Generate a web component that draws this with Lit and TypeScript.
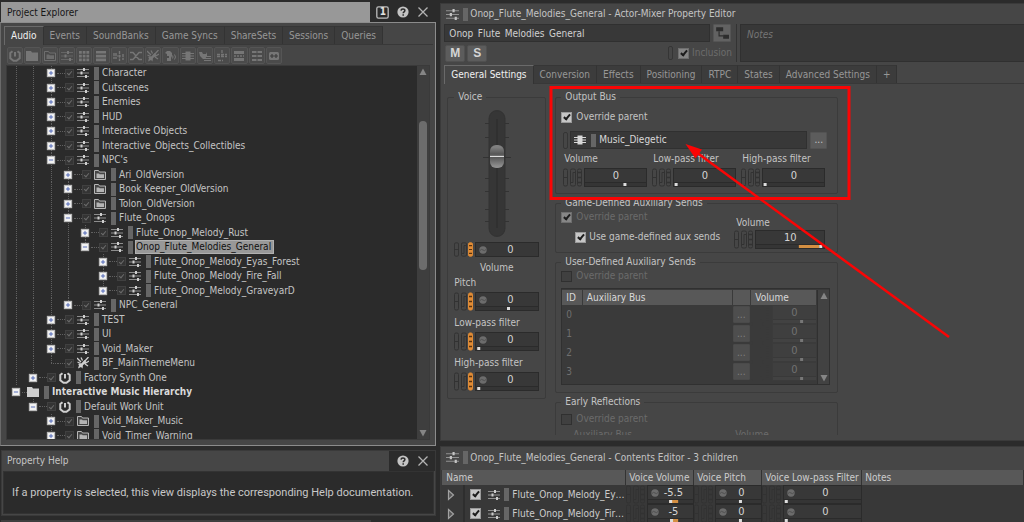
import { LitElement, html, css, svg, nothing } from "lit";
import { customElement, property } from "lit/decorators.js";
import { classMap } from "lit/directives/class-map.js";

/* ---------- shared look ---------- */

const base = css`
  *, *::before, *::after { box-sizing: border-box; }
  :host {
    font-family: "DejaVu Sans Condensed", "Open Sans", "Noto Sans", sans-serif;
    font-size: 10px;
    line-height: 14px;
    color: #c4c4c4;
  }
  svg { display: block; flex: none; }
  button, input, textarea { font: inherit; color: inherit; margin: 0; padding: 0; border: 0; background: none; border-radius: 0; outline: 0; }
  input[type="checkbox"] {
    appearance: none; flex: none; display: grid; place-content: center;
    width: 11px; height: 11px; background: #c6c6c6; border: 1px solid #9a9a9a;
  }
  input[type="checkbox"]:checked::before {
    content: ""; width: 4px; height: 7px; margin-top: -2px;
    border: solid #1c1c1c; border-width: 0 2px 2px 0; transform: rotate(40deg);
  }
  input[type="checkbox"]:disabled { background: #868686; border-color: #6e6e6e; }
  input[type="checkbox"]:disabled:not(:checked) { background: #404040; border-color: #303030; }
  label { white-space: nowrap; }
  .tint { flex: none; width: 5px; height: 13px; background: #666; }
`;

const glyphs: Record<string, unknown> = {
  mixer: svg`<g fill="currentColor"><path d="M0 2h12v1H0zM0 5.500h12v1H0zM0 9h12v1H0z" opacity=".6"/><path d="M6 1h2v3H6zM3.500 4.500h2v3h-2zM8 8h2v3H8z"/></g>`,
  unit: svg`<path d="M3.500 1.200 1.300 3v5.200L4.500 10.800h3L10.700 8.200V3L8.500 1.200" fill="none" stroke="currentColor" stroke-width="2"/><path d="M5 2h2v4.500H5z" fill="currentColor"/>`,
  folder: svg`<path d="M0 1h5l1 1.500h6V11H0z" fill="currentColor"/>`,
  vfolder: svg`<path d="M.5 1.500h4l1 1.500h6v7.500H.5z" fill="#4a4a4a" stroke="currentColor" opacity=".85"/><path d="M2.500 4.500h2.500l.7.800H10V9H2.500z" fill="currentColor" opacity=".8"/>`,
  grid: svg`<path d="M1 1h2.800v2.800H1zM4.700 1h2.800v2.800H4.700zM8.400 1h2.800v2.800H8.400zM1 4.700h2.800v2.800H1zM4.700 4.700h2.800v2.800H4.700zM8.400 4.700h2.800v2.800H8.400zM1 8.400h2.800v2.800H1zM4.700 8.400h2.800v2.800H4.700zM8.400 8.400h2.800v2.800H8.400z" fill="currentColor"/>`,
  bars: svg`<path d="M1 1h10v2.600H1zM1 4.800h10v2.600H1zM1 8.600h10v2.600H1z" fill="currentColor"/>`,
  seq: svg`<path d="M1 3v6M3 3v6M6.500 1v10M10 4v6" stroke="currentColor" stroke-width="1.400" stroke-dasharray="3 .8"/><path d="M4 6h4" stroke="currentColor"/>`,
  blend: svg`<path d="M0 2.500h3l6 7h3M0 9.500h3l6-7h3" fill="none" stroke="currentColor" stroke-width="1.400"/>`,
  sound: svg`<path d="M0 1l4 4M.5 5l3 1.500M4 .5l1.500 3M11.500 0 7 5M12 4 8 6.500M11 9 8 7" stroke="currentColor" stroke-width="1.300"/><path d="M7.500 3 10 5.500 6 8l-.5 3.500L4 10l-3 1.500L2 8 1 7l3.500-.7z" fill="currentColor"/>`,
  voice: svg`<path d="M1 3 3 1h3l2 2v3L7 8v3H3V8h2V6H3V4z" fill="currentColor"/><path d="M8.500 5.500q1 1.500 0 3M10.500 4.500q2 2.500 0 5" fill="none" stroke="currentColor"/>`,
  bus: svg`<path d="M3.500 1.500h5v9h-5z" fill="currentColor"/><path d="M0 3.500h12M0 6h12M0 8.500h12" stroke="currentColor"/>`,
  plug: svg`<path d="M0 2h3l1 2h3l1-2v4l-2 3H4L1 6z" fill="currentColor"/><path d="M6 6.500h6M6 8.500h6M5 10.500h7" stroke="currentColor"/>`,
  track: svg`<path d="M1 4.500h10M6 0v8M1 6.500h10M2 10.500h5" stroke="currentColor" stroke-width="1.300" stroke-dasharray="3 1"/>`,
  list: svg`<path d="M1 1h10v3H1zM1 8h10v3H1z" fill="currentColor"/><path d="M1 6h10" stroke="currentColor" stroke-width="1.500" stroke-dasharray="2 1"/>`,
  cells: svg`<path d="M1 1h4v2H1zM7 1h4v2H7zM1 5h4v2H1zM7 5h4v2H7zM1 9h4v2H1zM7 9h4v2H7z" fill="currentColor"/><path d="M5 2h2M5 6h2M5 10h2" stroke="currentColor"/>`,
  link: svg`<rect x="1" y="2" width="10" height="8" rx="1.500" fill="currentColor"/><path d="M2 6h8M4 4v4M8 4v4" stroke="#3c3c3c" stroke-width="1.200"/>`,
  tree: svg`<path d="M1 1h6v3.500H1zM7 7.500h5V11H7z" fill="#2d2d2d"/><path d="M3.500 4.500v4H7" fill="none" stroke="#2d2d2d"/>`,
  one: svg`<rect x=".75" y=".75" width="10.500" height="10.500" rx="1.500" fill="none" stroke="#bdbdbd" stroke-width="1.200"/>`,
  help: svg`<circle cx="6" cy="6" r="5.600" fill="#c4c4c4"/><path d="M4 4.600C4.100 2.300 8 2.400 7.900 4.600 7.900 5.900 6.200 5.900 6.200 7.300M6.200 8.200v1.500" fill="none" stroke="#2b2b2b" stroke-width="1.500"/>`,
  close: svg`<path d="M1.500 1.500l9 9M10.500 1.500l-9 9" stroke="#b4b4b4" stroke-width="1.300"/>`,
  up: svg`<path d="M2.500 9 6 2.500 9.500 9z" fill="#858585"/>`,
  down: svg`<path d="M2.500 3 6 9.500 9.500 3z" fill="#858585"/>`,
  play: svg`<path d="M3.500 1.500 8.500 6l-5 4.500z" fill="#555" stroke="#a2a2a2" stroke-width="1.200"/>`,
  plus: svg`<rect x="1.500" y="1.500" width="9" height="9" fill="#f2f2f2" stroke="#bbb"/><path d="M3.500 6h5M6 3.500v5" stroke="#3a54b0"/>`,
  minus: svg`<rect x="1.500" y="1.500" width="9" height="9" fill="#f2f2f2" stroke="#bbb"/><path d="M3.500 6h5" stroke="#3a54b0"/>`,
};

const icon = (name: string, size = 12) =>
  html`<svg width=${size} height=${size} viewBox="0 0 12 12" aria-hidden="true">${glyphs[name]}</svg>`;

/* ---------- tab strip ---------- */

@customElement("tab-strip")
export class TabStrip extends LitElement {
  @property({ attribute: false }) tabs: string[] = [];
  static styles = [base, css`
    :host { display: block; flex: none; }
    .strip { display: flex; height: 19px; border-bottom: 1px solid #383838; }
    button { flex: none; padding: 0 6px; height: 18px; background: #3c3c3c; color: #979797; border-right: 1px solid #333; border-top: 1px solid #363636; white-space: nowrap; }
    button.on { height: 19px; background: #464646; color: #f0f0f0; border-top: 1px solid #6a6a6a; border-left: 1px solid #6a6a6a; }
  `];
  render() {
    return html`<div class="strip" role="tablist">${this.tabs.map((t, i) =>
      html`<button role="tab" aria-selected=${i === 0} class=${classMap({ on: i === 0 })}>${t}</button>`)}</div>`;
  }
}

/* ---------- numeric field with link / RTPC / state markers ---------- */

@customElement("num-field")
export class NumField extends LitElement {
  @property() label = "Value";
  @property() value = "0";
  @property({ type: Number }) pos = 50;
  @property({ type: Number }) fillFrom = 0;
  @property({ type: Number }) fillTo = 0;
  @property({ type: Boolean }) slim = false;
  @property({ type: Boolean }) rtpc = false;
  @property({ type: Boolean }) dot = false;
  @property({ type: Boolean, reflect: true }) disabled = false;
  static styles = [base, css`
    :host { display: flex; min-width: 0; }
    :host([disabled]) .box { background: #3f3f3f; border-color: #3b3b3b; color: #717171; }
    :host([disabled]) .strip { background: #424242; border-color: #393939; }
    .box { flex: 1; min-width: 0; display: flex; flex-direction: column; background: #383838; border: 1px solid #2b2b2b; }
    .top { flex: 1; display: flex; align-items: center; padding-left: 3px; }
    .top.plain { padding-left: 0; }
    input { flex: 1; min-width: 0; width: 10px; height: 13px; text-align: center; font-size: 11px; color: #d4d4d4; }
    input:disabled { color: #717171; }
    .dotted input { padding-right: 5px; }
    .strip { height: 4px; border-top: 1px solid #2b2b2b; background: #353535; }
  `];
  render() {
    const h = this.slim ? 15 : 19;
    const line = this.disabled ? "#3a3a3a" : "#323232";
    const on = this.rtpc;
    return html`
      <svg width="21" height=${h} viewBox="0 0 21 19" preserveAspectRatio="none" fill="none" stroke=${line} aria-hidden="true">
        <rect x=".5" y="1" width="4" height="17" rx="1.500"/><path d="M0 9.500h5"/>
        <rect x="7.500" y="1" width="5" height="17" rx="1.500"/><path d="M8 14.500h2v-10h2"/>
        <rect x="14.500" y="1" width="4" height="17" rx="1.500" fill=${on ? "#e08b35" : "none"} stroke=${on ? "#e08b35" : line}/>
        <path d="M15 4.500h3M15 9.500h3M15 14.500h3" stroke=${on ? "#5a3410" : line} stroke-width="1.500"/>
      </svg>
      <div class="box">
        <div class=${classMap({ top: true, plain: !this.dot, dotted: this.dot })}>
          ${this.dot ? html`<svg width="8" height="8" viewBox="0 0 8 8"><circle cx="4" cy="4" r="3.700" fill="#6c6c6c"/><path d="M1 4.500q1.500-2 3-.5t3-.5" fill="none" stroke="#505050"/></svg>` : nothing}
          <input type="text" aria-label=${this.label} .value=${this.value} ?disabled=${this.disabled}>
        </div>
        ${this.slim ? nothing : html`<div class="strip"><svg width="100%" height="3">
          ${this.fillTo ? svg`<rect x="${this.fillFrom}%" y="0" width="${this.fillTo - this.fillFrom}%" height="3" fill="#d48f42"/>` : nothing}
          <rect x="${this.pos}%" y="0" width="3" height="3" fill=${this.disabled ? "#777" : "#dedede"}/></svg></div>`}
      </div>`;
  }
}

/* ---------- project explorer ---------- */

type Node = { t: string; lv: number; kind: string; open?: boolean; leaf?: boolean; rails: number[]; sel?: boolean; last?: boolean };
const n = (lv: number, t: string, kind: string, rails: number[], extra: Partial<Node> = {}): Node => ({ lv, t, kind, rails, ...extra });

const NODES: Node[] = [
  n(2, "Character", "mixer", [0, 1]),
  n(2, "Cutscenes", "mixer", [0, 1]),
  n(2, "Enemies", "mixer", [0, 1]),
  n(2, "HUD", "mixer", [0, 1]),
  n(2, "Interactive Objects", "mixer", [0, 1]),
  n(2, "Interactive_Objects_Collectibles", "mixer", [0, 1]),
  n(2, "NPC's", "mixer", [0, 1], { open: true }),
  n(3, "Ari_OldVersion", "vfolder", [0, 1, 2]),
  n(3, "Book Keeper_OldVersion", "vfolder", [0, 1, 2]),
  n(3, "Tolon_OldVersion", "vfolder", [0, 1, 2]),
  n(3, "Flute_Onops", "mixer", [0, 1, 2], { open: true }),
  n(4, "Flute_Onop_Melody_Rust", "mixer", [0, 1, 2, 3]),
  n(4, "Onop_Flute_Melodies_General", "mixer", [0, 1, 2, 3], { open: true, sel: true, last: true }),
  n(5, "Flute_Onop_Melody_Eyas_Forest", "mixer", [0, 1, 2, 3]),
  n(5, "Flute_Onop_Melody_Fire_Fall", "mixer", [0, 1, 2, 3]),
  n(5, "Flute_Onop_Melody_GraveyarD", "mixer", [0, 1, 2, 3], { last: true }),
  n(3, "NPC_General", "mixer", [0, 1, 2], { last: true }),
  n(2, "TEST", "mixer", [0, 1]),
  n(2, "UI", "mixer", [0, 1]),
  n(2, "Void_Maker", "mixer", [0, 1]),
  n(2, "BF_MainThemeMenu", "sound", [0, 1], { leaf: true, last: true }),
  n(1, "Factory Synth One", "unit", [0], { last: true }),
  n(0, "Interactive Music Hierarchy", "folder", [], { open: true, last: true }),
  n(1, "Default Work Unit", "unit", [], { open: true, last: true }),
  n(2, "Void_Maker_Music", "vfolder", []),
  n(2, "Void_Timer_Warning", "vfolder", []),
];
const TOOLS = ["unit", "folder", "vfolder", "mixer", "grid", "bars", "seq", "blend", "sound", "voice", "bus", "plug", "track", "list", "cells", "link"];
const railX = (lv: number) => Math.round(9 + lv * 17.3);

@customElement("project-explorer")
export class ProjectExplorer extends LitElement {
  static styles = [base, css`
    :host { display: flex; flex-direction: column; min-height: 0; }
    .head { display: flex; height: 20px; flex: none; }
    .title { flex: 1; padding: 0 6px; line-height: 21px; background: #989898; color: #161616; border-left: 1px solid #2b2b2b; }
    .acts { display: flex; align-items: center; gap: 7px; width: 66px; padding-left: 6px; }
    .acts button { display: grid; place-items: center; width: 13px; height: 13px; }
    .acts button > * { grid-area: 1 / 1; }
    .num { font-weight: bold; line-height: 12px; color: #e2e2e2; }
    .body { flex: 1; min-height: 0; display: flex; flex-direction: column; background: #464646; border: 1px solid #8c8c8c; border-left-color: #6a6a6a; padding: 3px 5px 5px 5px; }
    .body tab-strip { margin: 0 -3px 0 -2px; }
    .tools { flex: none; display: grid; grid-template-columns: repeat(16, 1fr); gap: 1px; width: 276px; padding: 2px 0 1px 1px; }
    .tools button { height: 17px; display: grid; place-items: center; color: #767676; border: 1px solid #555; border-radius: 2px; background: #4b4b4b; }
    .view { flex: 1; min-height: 0; display: flex; background: #2b2b2b; border: 1px solid #3a3a3a; }
    .tree { flex: 1; min-width: 0; overflow: hidden; }
    .row { display: flex; align-items: center; height: 14px; white-space: nowrap; color: #c4c4c4; }
    .row:nth-child(even) { height: 15px; }
    .row .vis { width: 9px; height: 9px; margin-right: 3px; background: #343434; border-color: #404040; }
    .row .vis:checked::before { width: 3px; height: 5px; margin-top: -1px; border-color: #6b6b6b; border-width: 0 1px 1px 0; }
    .rails { align-self: stretch; }
    .exp { width: 12px; height: 12px; flex: none; margin-left: -12px; display: grid; place-items: center; }
    .dots { flex: none; width: 8px; height: 1px; border-top: 1px dotted #606060; }
    .dots.near { width: 5px; }
    .ic { color: #cfcfcf; margin-right: 5px; }
    .tint { margin-right: 2px; }
    .name { padding: 0 2px 0 1px; line-height: 14px; }
    .sel { background: #989898; color: #101010; outline: 1px solid #b0b0b0; outline-offset: -1px; padding-right: 3px; }
    .root { font-weight: bold; color: #dadada; }
    .scroll { width: 12px; flex: none; display: flex; flex-direction: column; background: #3e3e3e; }
    .gapA { flex: 43; } .gapB { flex: 157; }
    .thumb { flex: 150; margin: 0 2px; border-radius: 4px; background: #6c6c6c; }
  `];
  private row(d: Node) {
    const x = railX(d.lv);
    return html`<div class="row" role="treeitem">
      <svg class="rails" width=${x + 6} height="15" stroke="#606060" stroke-dasharray="1 1" aria-hidden="true">
        ${d.rails.map((r) => svg`<path d="M${railX(r) + 0.5} 0v15"/>`)}
        ${d.lv > 0 ? svg`<path d="M${x + 0.5} 0v${d.last ? 7 : 15}"/>` : nothing}
        ${d.leaf ? svg`<path d="M${x} 7.500h6"/>` : nothing}
      </svg>
      ${d.leaf ? nothing : html`<button class="exp" aria-label=${d.open ? "Collapse" : "Expand"}>${icon(d.open ? "minus" : "plus", 10)}</button>`}
      <span class=${classMap({ dots: true, near: d.lv === 0 })}></span>
      ${d.lv > 0 ? html`<input class="vis" type="checkbox" checked aria-label=${d.t}>` : nothing}
      <span class="ic">${icon(d.kind)}</span><span class="tint"></span>
      <span class=${classMap({ name: true, sel: !!d.sel, root: d.lv === 0 })}>${d.t}</span>
    </div>`;
  }
  render() {
    return html`
      <div class="head"><div class="title">Project Explorer</div>
        <div class="acts">
          <button>${icon("one", 13)}<span class="num">1</span></button>
          <button aria-label="Help">${icon("help")}</button>
          <button aria-label="Close">${icon("close")}</button>
        </div></div>
      <div class="body">
        <tab-strip .tabs=${["Audio", "Events", "SoundBanks", "Game Syncs", "ShareSets", "Sessions", "Queries"]}></tab-strip>
        <div class="tools">${TOOLS.map((t) => html`<button aria-label=${t}>${icon(t)}</button>`)}</div>
        <div class="view">
          <div class="tree" role="tree">${NODES.map((d) => this.row(d))}</div>
          <div class="scroll">${icon("up")}<i class="gapA"></i><i class="thumb"></i><i class="gapB"></i>${icon("down")}</div>
        </div>
      </div>`;
  }
}

/* ---------- property help ---------- */

@customElement("property-help")
export class PropertyHelp extends LitElement {
  static styles = [base, css`
    :host { display: block; background: #464646; margin: 0 0 0 1px; border: 1px solid #3a3a3a; }
    .head { display: flex; height: 20px; }
    .title { flex: 1; padding-left: 5px; line-height: 20px; }
    .acts { display: flex; align-items: center; gap: 8px; padding: 0 6px 0 8px; background: #2b2b2b; }
    button { display: grid; place-items: center; width: 12px; height: 12px; }
    p { margin: 0 1px 1px; padding: 0 8px; height: 43px; line-height: 41px; background: #2b2b2b; border: 1px solid #333; font-family: Roboto, "Open Sans", sans-serif; font-size: 11px; white-space: nowrap; overflow: hidden; color: #c8c8c8; }
  `];
  render() {
    return html`<div class="head"><div class="title">Property Help</div><div class="acts">
        <button aria-label="Help">${icon("help")}</button><button aria-label="Close">${icon("close")}</button></div></div>
      <p>If a property is selected, this view displays the corresponding Help documentation.</p>`;
  }
}

/* ---------- property editor ---------- */

@customElement("property-editor")
export class PropertyEditor extends LitElement {
  static styles = [base, css`
    :host { display: flex; flex-direction: column; min-height: 0; background: #464646; border: 1px solid #3a3a3a; border-right: 0; padding-left: 3px; overflow: hidden; }
    .title { flex: none; height: 20px; display: flex; align-items: center; gap: 4px; padding-left: 2px; white-space: nowrap; }
    .title .lbl { margin-left: -2px; }
    .top { flex: none; display: grid; grid-template-columns: 51fr 49fr; height: 38px; margin-bottom: 3px; }
    .ident { display: grid; grid-template-rows: 18px 18px; row-gap: 2px; padding-right: 5px; border-right: 1px solid #333; margin-right: 3px; }
    .line { display: flex; align-items: center; gap: 3px; }
    .nm { flex: 1; min-width: 0; height: 18px; line-height: 16px; padding: 0 4px; background: #383838; border: 1px solid #303030; color: #d0d0d0; }
    .sq { flex: none; width: 18px; height: 18px; display: grid; place-items: center; background: #626262; border: 1px solid #555; border-radius: 1px; }
    .ms { width: 20px; height: 17px; margin-left: 1px; margin-right: -2px; font: bold 12px/15px "Liberation Sans", sans-serif; background: #5c5c5c; border: 1px solid #505050; border-radius: 2px; color: #d5d5d5; }
    .incl { margin-left: auto; margin-right: -1px; display: flex; align-items: center; gap: 3px; color: #6c6c6c; }
    .lnk { width: 5px; height: 14px; margin-right: 2px; border: 1px solid #353535; border-radius: 2px; display: block; }
    textarea { display: block; width: 100%; height: 38px; padding: 3px 6px; resize: none; background: #383838; border: 1px solid #303030; border-right: 0; }
    textarea::placeholder { color: #757575; font-style: italic; opacity: 1; }
    .body { flex: 1; min-height: 0; overflow: hidden; display: grid; grid-template-columns: 99px 283px; column-gap: 9px; align-items: start; padding: 6px 0 0 3px; margin-bottom: 5px; }
    fieldset { min-width: 0; margin: 0; padding: 0 5px; border: 1px solid #3b3b3b; border-radius: 2px; }
    legend { padding: 0 4px; margin-left: 0; line-height: 14px; }
    .voice { padding: 6px 6px 6px; height: 309px; display: flex; flex-direction: column; }
    .fader { flex: none; align-self: center; display: grid; margin-bottom: 5px; }
    .fader > * { grid-area: 1 / 1; justify-self: center; }
    .fader input { appearance: none; writing-mode: vertical-lr; direction: rtl; width: 17px; height: 127px; background: transparent; }
    .fader input::-webkit-slider-thumb {
      appearance: none; width: 14px; height: 23px; border-radius: 6px;
      background: linear-gradient(#808080 0 10%, #555 40%, #6f6f6f 46%, #ddd 46% 52%, #555 52%, #8e8e8e 92%);
    }
    .voice .cap { text-align: center; margin: 4px 0 1px; }
    .voice .par { margin-bottom: 1px; height: 14px; }
    .voice num-field:not([slim]) { margin-bottom: 5px; margin-top: 1px; flex: none; height: 19px; }
    .col { display: flex; flex-direction: column; gap: 2px; }
    .chk { display: flex; align-items: center; gap: 4px; height: 14px; }
    .off { color: #6b6b6b; }
    .bus { height: 104px; }
    .bus .chk { margin-top: 6px; }
    .pick { display: flex; align-items: center; gap: 3px; margin: 7px 5px 0 2px; height: 18px; }
    .pick .lnk { height: 17px; margin: 0 -1px 0 0; }
    .pick .fld { flex: 1; min-width: 0; height: 18px; display: flex; align-items: center; gap: 5px; padding-left: 3px; background: #383838; border: 1px solid #303030; color: #d8d8d8; }
    .pick .fld input { flex: 1; min-width: 0; margin-left: -2px; }
    .more { flex: none; width: 17px; height: 17px; line-height: 12px; background: #5c5c5c; border: 1px solid #535353; border-radius: 1px; color: #c8c8c8; }
    .three { display: grid; grid-template-columns: repeat(3, 1fr); column-gap: 5px; margin: 3px 7px 0 2px; }
    .three label { display: block; padding-left: 1px; height: 16px; }
    .three num-field { height: 19px; }
    .game { height: 57px; display: grid; grid-template-columns: 1fr 91px; padding-right: 12px; }
    .game .sub { margin: 6px 0 0 14px; gap: 3px; }
    .game .vol { padding-top: 6px; }
    .game .vol label { display: block; padding-left: 2px; }
    .game num-field { height: 19px; }
    .user { height: 138px; }
    .user .chk { margin-bottom: 5px; }
    .tblwrap { display: flex; margin-right: 2px; border: 1px solid #303030; background: #3a3a3a; padding-top: 1px; height: 97px; }
    table { flex: 1; border-collapse: collapse; table-layout: fixed; min-width: 0; width: 100%; height: 91px; }
    th { height: 15px; padding: 0 4px; text-align: left; font-weight: normal; line-height: 14px; background: #585858; color: #d8d8d8; border-right: 1px solid #3a3a3a; }
    td { height: 19px; padding: 0; color: #6f6f6f; }
    td.id { padding-left: 4px; }
    td .more { display: block; width: 17px; height: 17px; background: #4e4e4e; border-color: #4a4a4a; color: #808080; }
    .cid { width: 20px; } .cbtn { width: 18px; } .cvol { width: 66px; }
    .scroll { width: 12px; flex: none; display: flex; flex-direction: column; justify-content: space-between; background: #424242; border-left: 1px solid #303030; }
    .early .chk { margin-top: 3px; }
    .early .pair { display: grid; grid-template-columns: 1fr 92px; padding: 2px 5px 0 12px; }
  `];
  private chk(id: string, text: string, checked: boolean, disabled = false, cls = "") {
    return html`<div class="chk ${cls} ${disabled ? "off" : ""}"><input id=${id} type="checkbox" ?checked=${checked} ?disabled=${disabled}><label for=${id}>${text}</label></div>`;
  }
  render() {
    const param = (t: string, pos: number) => html`<label class="par">${t}</label><num-field label=${t} .pos=${pos} rtpc dot></num-field>`;
    return html`
      <div class="title">${icon("mixer", 13)}<span class="tint"></span><span class="lbl">Onop_Flute_Melodies_General - Actor-Mixer Property Editor</span></div>
      <div class="top">
        <div class="ident">
          <div class="line"><input class="nm" type="text" aria-label="Name" value="Onop_Flute_Melodies_General"><button class="sq" aria-label="Show in hierarchy">${icon("tree", 14)}</button></div>
          <div class="line"><button class="ms">M</button><button class="ms">S</button>
            <div class="incl"><i class="lnk"></i><input id="incl" type="checkbox" checked disabled><label for="incl">Inclusion</label></div></div>
        </div>
        <textarea placeholder="Notes" aria-label="Notes"></textarea>
      </div>
      <tab-strip .tabs=${["General Settings", "Conversion", "Effects", "Positioning", "RTPC", "States", "Advanced Settings", "+"]}></tab-strip>
      <div class="body">
        <fieldset class="voice"><legend>Voice</legend>
          <div class="fader">
            <svg width="28" height="127" viewBox="0 0 28 127" stroke="#333" aria-hidden="true">
              <path d="M2 13.500h24M2 27.500h24M0 47.500h28M2 68.500h24M2 81.500h24M2 99.500h24M2 111.500h24"/>
              <rect x="6" y=".5" width="16" height="126" rx="8" fill="#363636"/><path d="M14 9v109" stroke="#2a2a2a"/>
            </svg>
            <input type="range" min="0" max="100" value="66" aria-label="Voice volume">
          </div>
          <num-field label="Volume" slim rtpc dot></num-field>
          <div class="cap">Volume</div>
          ${param("Pitch", 50)}${param("Low-pass filter", 2)}${param("High-pass filter", 2)}
        </fieldset>
        <div class="col">
          <fieldset class="bus"><legend>Output Bus</legend>
            ${this.chk("ob", "Override parent", true)}
            <div class="pick"><i class="lnk"></i><div class="fld">${icon("bus")}<span class="tint"></span><input type="text" aria-label="Output bus" value="Music_Diegetic"></div><button class="more" aria-label="Browse">...</button></div>
            <div class="three">
              <div><label>Volume</label><num-field label="Volume" .pos=${63}></num-field></div>
              <div><label>Low-pass filter</label><num-field label="Low-pass filter" .pos=${1}></num-field></div>
              <div><label>High-pass filter</label><num-field label="High-pass filter" .pos=${1}></num-field></div>
            </div>
          </fieldset>
          <fieldset class="game"><legend>Game-Defined Auxiliary Sends</legend>
            <div>${this.chk("ga", "Override parent", true, true)}${this.chk("gu", "Use game-defined aux sends", true, false, "sub")}</div>
            <div class="vol"><label>Volume</label><num-field label="Volume" value="10" .pos=${93} .fillFrom=${63} .fillTo=${93}></num-field></div>
          </fieldset>
          <fieldset class="user"><legend>User-Defined Auxiliary Sends</legend>
            ${this.chk("ua", "Override parent", false, true)}
            <div class="tblwrap">
              <table><colgroup><col class="cid"><col><col class="cbtn"><col class="cvol"></colgroup>
                <thead><tr><th>ID</th><th>Auxiliary Bus</th><th></th><th>Volume</th></tr></thead>
                <tbody>${[0, 1, 2, 3].map((i) => html`<tr><td class="id">${i}</td><td></td><td><button class="more" disabled aria-label="Browse">...</button></td><td><num-field label="Volume" disabled .pos=${63}></num-field></td></tr>`)}</tbody>
              </table>
              <div class="scroll">${icon("up")}${icon("down")}</div>
            </div>
          </fieldset>
          <fieldset class="early"><legend>Early Reflections</legend>
            ${this.chk("er", "Override parent", false, true)}
            <div class="pair off"><span>Auxiliary Bus</span><span>Volume</span></div>
          </fieldset>
        </div>
      </div>`;
  }
}

/* ---------- contents editor ---------- */

@customElement("contents-editor")
export class ContentsEditor extends LitElement {
  static styles = [base, css`
    :host { display: block; min-height: 0; overflow: hidden; background: #464646; border: 1px solid #3a3a3a; border-right: 0; border-bottom: 0; }
    .title { height: 21px; display: flex; align-items: center; gap: 4px; padding-left: 5px; white-space: nowrap; }
    .title .lbl { margin-left: -2px; }
    table { width: 100%; border-collapse: collapse; table-layout: fixed; background: #383838; border-left: 1px solid #383838; margin-top: 2px; }
    th { height: 15px; padding: 0 3px; font-weight: normal; text-align: left; line-height: 14px; background: #585858; color: #cccccc; border-right: 1px solid #333; white-space: nowrap; }
    th:first-child { padding-left: 4px; }
    td { height: 19px; padding: 0; }
    .who { display: flex; align-items: center; padding-left: 3px; white-space: nowrap; color: #cccccc; }
    .who button { margin-right: 6px; }
    .bar { width: 2px; height: 19px; border: solid #2e2e2e; border-width: 0 1px; margin-right: 5px; }
    .mx { margin: 0 4px 0 7px; }
    .who .tint { margin-right: 3px; }
    .nm { flex: 1; min-width: 0; overflow: hidden; text-overflow: ellipsis; }
    .c1 { width: 184px; } .c2 { width: 68px; } .c3 { width: 68px; } .c4 { width: 100px; }
  `];
  render() {
    const rows = [
      { t: "Flute_Onop_Melody_Eyas_Forest", v: "-5.5", p: 47 },
      { t: "Flute_Onop_Melody_Fire_Fall", v: "-5", p: 49 },
    ];
    return html`
      <div class="title">${icon("mixer", 13)}<span class="tint"></span><span class="lbl">Onop_Flute_Melodies_General - Contents Editor - 3 children</span></div>
      <table><colgroup><col class="c1"><col class="c2"><col class="c3"><col class="c4"><col></colgroup>
        <thead><tr><th>Name</th><th>Voice Volume</th><th>Voice Pitch</th><th>Voice Low-pass Filter</th><th>Notes</th></tr></thead>
        <tbody>${rows.map((r) => html`<tr>
          <td><div class="who"><button aria-label="Play">${icon("play")}</button><i class="bar"></i><input type="checkbox" checked aria-label=${r.t}><span class="mx">${icon("mixer")}</span><span class="tint"></span><span class="nm">${r.t}</span></div></td>
          <td><num-field label="Voice Volume" dot .value=${r.v} .pos=${r.p} .fillFrom=${r.p} .fillTo=${67}></num-field></td>
          <td><num-field label="Voice Pitch" dot .pos=${51}></num-field></td>
          <td><num-field label="Voice Low-pass Filter" dot .pos=${1}></num-field></td>
          <td></td></tr>`)}</tbody>
      </table>`;
  }
}

/* ---------- window ---------- */

@customElement("app-root")
export class AppRoot extends LitElement {
  static styles = [base, css`
    :host { display: grid; grid-template-columns: 43fr 57fr; height: 100vh; background: #2b2b2b; overflow: hidden; position: relative; }
    .left { display: flex; flex-direction: column; min-width: 0; min-height: 0; padding: 2px 4px 0 0; gap: 4px; }
    .left project-explorer { flex: 1; }
    .next { flex: none; height: 2px; margin-right: 65px; margin-left: 1px; background: #3e3e3e; }
    .right { display: grid; grid-template-rows: 1fr 76px; min-width: 0; min-height: 0; padding-top: 3px; row-gap: 5px; }
    .marks { position: absolute; left: 43%; top: 0; pointer-events: none; }
  `];
  render() {
    return html`
      <div class="left"><project-explorer></project-explorer><property-help></property-help><div class="next"></div></div>
      <div class="right"><property-editor></property-editor><contents-editor></contents-editor></div>
      <svg class="marks" width="520" height="345" viewBox="440 0 520 345" aria-hidden="true">
        <rect x="551" y="87.500" width="298" height="111" fill="none" stroke="#fa0505" stroke-width="3"/>
        <path d="M949 337 696 152" stroke="#fa0505" stroke-width="2.500"/>
        <path d="M685.500 144 702 149.500 695.500 158.500z" fill="#fa0505"/>
      </svg>`;
  }
}
